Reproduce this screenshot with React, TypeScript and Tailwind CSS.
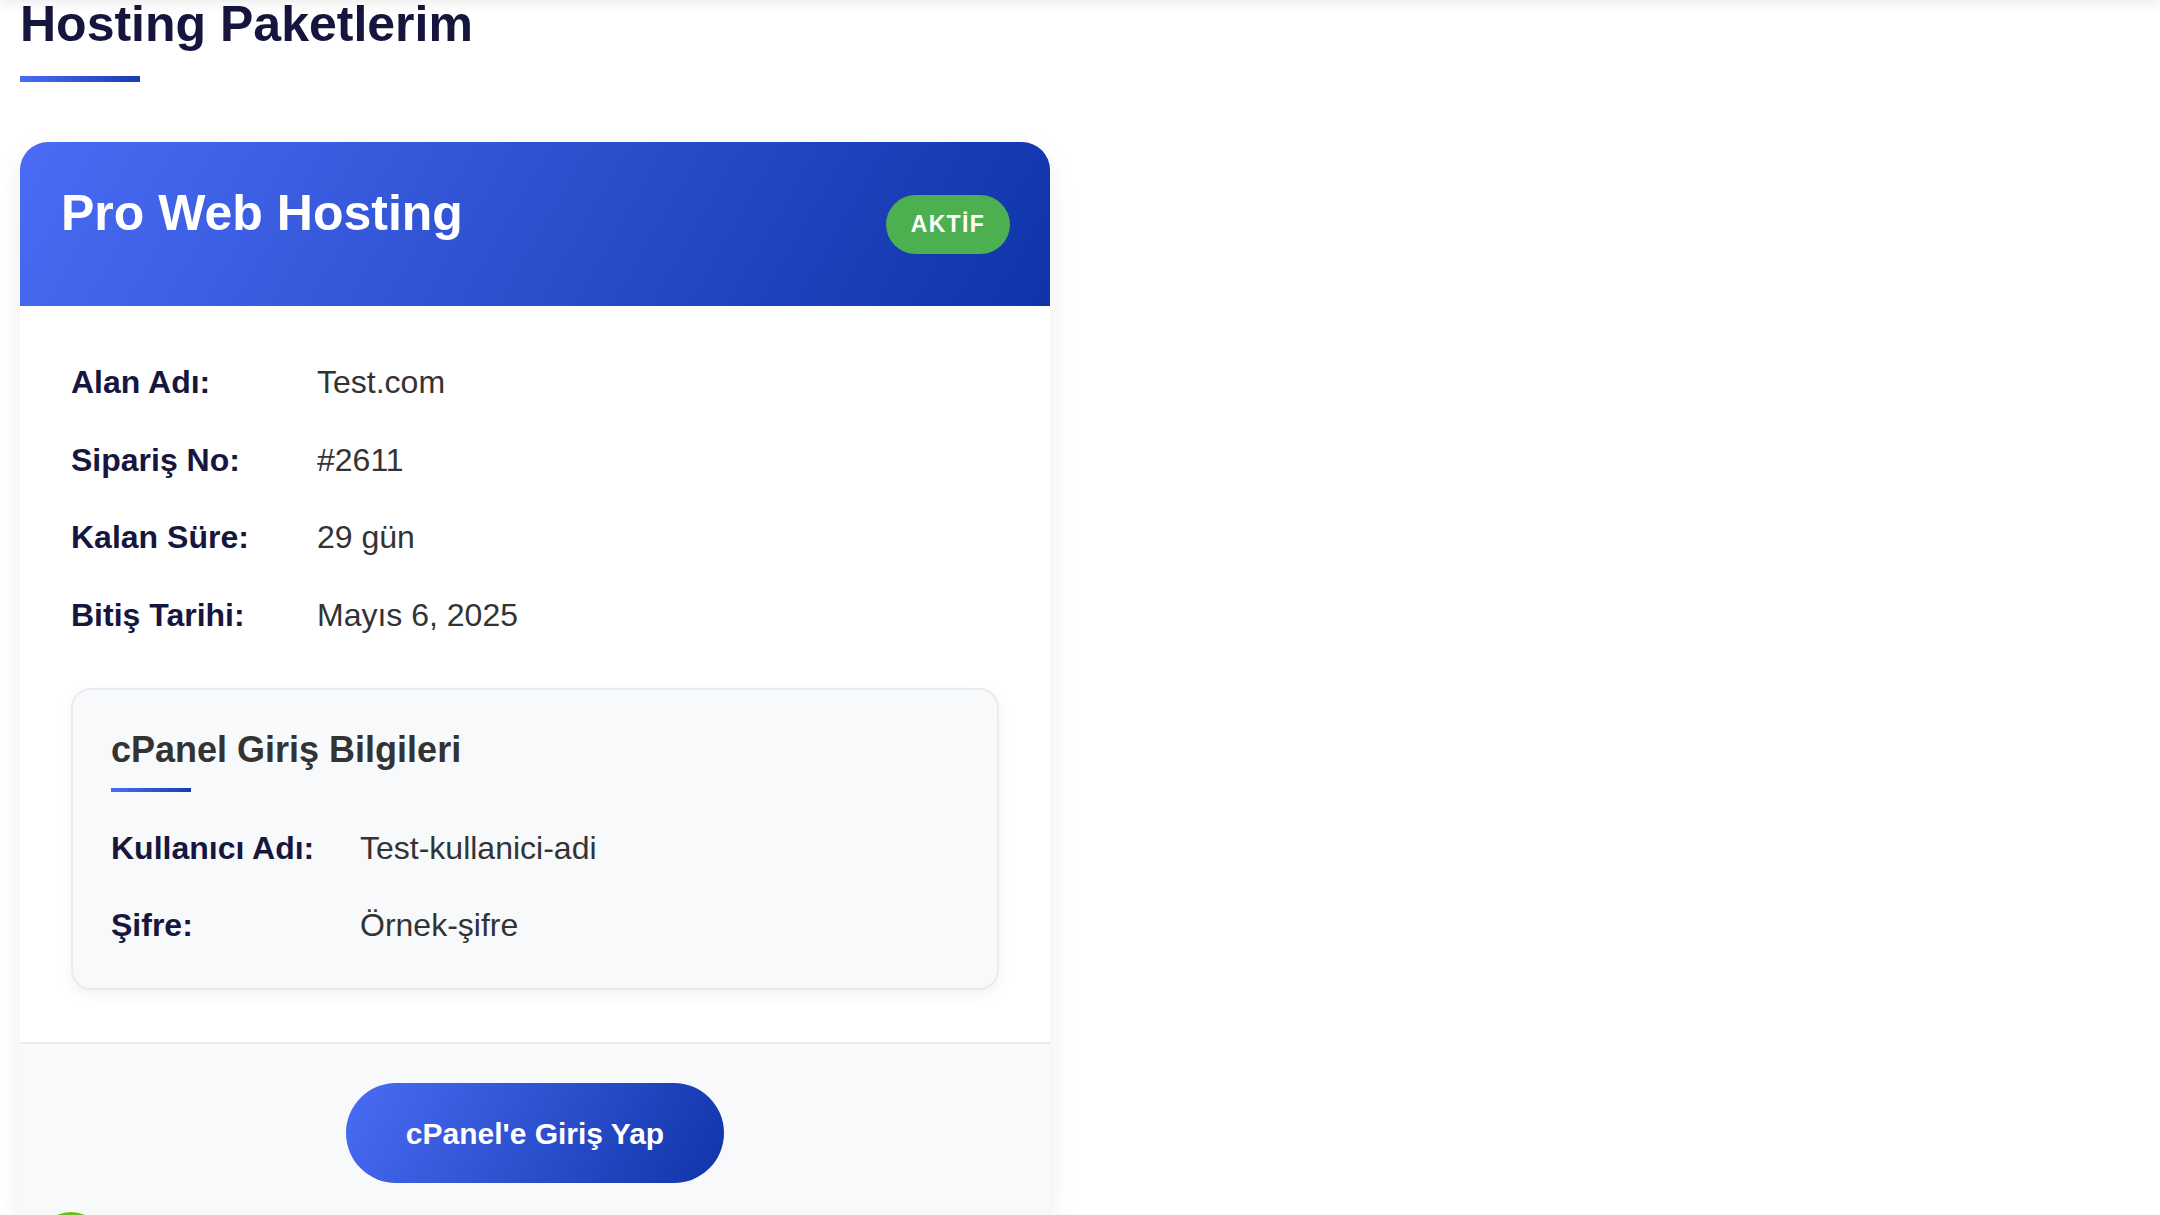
import React from "react";

const details = [
  { label: "Alan Adı:", value: "Test.com" },
  { label: "Sipariş No:", value: "#2611" },
  { label: "Kalan Süre:", value: "29 gün" },
  { label: "Bitiş Tarihi:", value: "Mayıs 6, 2025" },
];

const cpanel = [
  { label: "Kullanıcı Adı:", value: "Test-kullanici-adi" },
  { label: "Şifre:", value: "Örnek-şifre" },
];

const HostingCard = () => {
  return (
    <div className="mt-[60px] w-[1030px] overflow-hidden rounded-[28px] bg-white shadow-[0_10px_30px_rgba(0,0,0,0.07)]">
      <div className="flex h-[164px] items-center justify-between bg-[linear-gradient(120deg,#4a6cf5,#0f33a8)] pl-[41px] pr-[40px]">
        <h3 className="mb-[23px] text-[50px] font-bold leading-[1.2] text-white">
          Pro Web Hosting
        </h3>
        <span className="flex h-[59px] items-center rounded-full bg-[#4caf50] px-[25px] text-[23px] font-bold tracking-[1.3px] text-white">
          AKTİF
        </span>
      </div>

      <div className="px-[51px] pt-[53px] pb-[51.5px]">
        <div className="grid grid-cols-[246px_1fr] gap-y-[31px] text-[32px] leading-[46.5px]">
          {details.map((d) => (
            <React.Fragment key={d.label}>
              <span className="font-bold text-[#16163e]">{d.label}</span>
              <span className="text-[#333333]">{d.value}</span>
            </React.Fragment>
          ))}
        </div>

        <div className="mt-[49.5px] rounded-[20px] border-2 border-[#e9ecef] bg-[#f8f9fa] px-[38px] pt-[39px] pb-[39.5px] shadow-[0_5px_15px_rgba(0,0,0,0.05)]">
          <h4 className="text-[36px] font-bold leading-[42px] text-[#333333]">
            cPanel Giriş Bilgileri
          </h4>
          <div className="mt-[17px] h-[4px] w-[80px] bg-[linear-gradient(90deg,#4a6cf5,#1a3cb0)]" />
          <div className="mt-[33px] grid grid-cols-[249px_1fr] gap-y-[31px] text-[32px] leading-[46.5px]">
            {cpanel.map((d) => (
              <React.Fragment key={d.label}>
                <span className="font-bold text-[#16163e]">{d.label}</span>
                <span className="text-[#333333]">{d.value}</span>
              </React.Fragment>
            ))}
          </div>
        </div>
      </div>

      <div className="flex justify-center border-t-2 border-[#e9ecef] bg-[#f8f9fa] pt-[39.5px] pb-[44px]">
        <button className="h-[100px] rounded-full bg-[linear-gradient(120deg,#4a6cf5,#1034a8)] px-[60px] text-[30px] font-bold text-white">
          cPanel'e Giriş Yap
        </button>
      </div>
    </div>
  );
};

export default function App() {
  return (
    <div className="relative min-h-screen overflow-hidden bg-white font-['Liberation_Sans',Arial,sans-serif]">
      <div className="fixed top-[-80px] right-0 left-0 z-10 h-[80px] bg-white shadow-[0_2px_14px_rgba(0,0,0,0.09)]" />

      <div className="pl-[20px]">
        <h2 className="-mt-[6px] text-[50px] font-bold leading-[1.2] text-[#15153d]">
          Hosting Paketlerim
        </h2>
        <div className="mt-[22px] h-[6px] w-[120px] bg-[linear-gradient(90deg,#4a6cf5,#1a3cb0)]" />
        <HostingCard />
      </div>

      <div className="fixed top-[1212px] left-[36px] z-10 h-[70px] w-[70px] rounded-full bg-[#6dbb1c]" />
    </div>
  );
}
